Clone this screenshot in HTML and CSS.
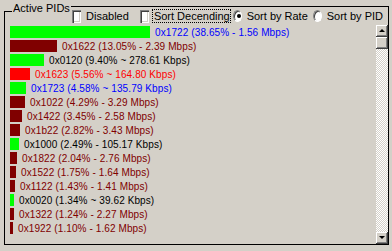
FILE: index.html
```html
<!DOCTYPE html>
<html lang="en">
<head>
  <meta charset="UTF-8">
  <title>Active PIDs</title>
  <link rel="stylesheet" href="styles.css">
</head>
<body>

  <div class="group">
    <div class="legend">Active PIDs</div>

    <div class="toolbar">
      <span class="check"></span>
      <span class="label">Disabled</span>
      <span class="check second"></span>
      <span class="label focus">Sort Decending</span>
      <span class="radio on"></span>
      <span class="label">Sort by Rate</span>
      <span class="radio"></span>
      <span class="label">Sort by PID</span>
    </div>

    <div class="listbox">
      <div class="rows">
        <div class="row"><span class="bar green" style="width:140px"></span><span class="txt blue">0x1722 (38.65% - 1.56 Mbps)</span></div>
        <div class="row"><span class="bar dark" style="width:47px"></span><span class="txt maroon">0x1622 (13.05% - 2.39 Mbps)</span></div>
        <div class="row"><span class="bar green" style="width:34px"></span><span class="txt">0x0120 (9.40% ~ 278.61 Kbps)</span></div>
        <div class="row"><span class="bar red" style="width:20px"></span><span class="txt redtxt">0x1623 (5.56% ~ 164.80 Kbps)</span></div>
        <div class="row"><span class="bar green" style="width:16px"></span><span class="txt blue">0x1723 (4.58% ~ 135.79 Kbps)</span></div>
        <div class="row"><span class="bar dark" style="width:15px"></span><span class="txt maroon">0x1022 (4.29% - 3.29 Mbps)</span></div>
        <div class="row"><span class="bar dark" style="width:12px"></span><span class="txt maroon">0x1422 (3.45% - 2.58 Mbps)</span></div>
        <div class="row"><span class="bar dark" style="width:10px"></span><span class="txt maroon">0x1b22 (2.82% - 3.43 Mbps)</span></div>
        <div class="row"><span class="bar green" style="width:9px"></span><span class="txt">0x1000 (2.49% - 105.17 Kbps)</span></div>
        <div class="row"><span class="bar dark" style="width:7px"></span><span class="txt maroon">0x1822 (2.04% - 2.76 Mbps)</span></div>
        <div class="row"><span class="bar dark" style="width:6px"></span><span class="txt maroon">0x1522 (1.75% - 1.64 Mbps)</span></div>
        <div class="row"><span class="bar dark" style="width:5px"></span><span class="txt maroon">0x1122 (1.43% - 1.41 Mbps)</span></div>
        <div class="row"><span class="bar green" style="width:4px"></span><span class="txt">0x0020 (1.34% ~ 39.62 Kbps)</span></div>
        <div class="row"><span class="bar dark" style="width:4px"></span><span class="txt maroon">0x1322 (1.24% - 2.27 Mbps)</span></div>
        <div class="row"><span class="bar dark" style="width:3px"></span><span class="txt maroon">0x1922 (1.10% - 1.62 Mbps)</span></div>
      </div>

      <div class="scrollbar">
        <div class="sbtn"><span class="arrow up"></span></div>
        <div class="thumb"></div>
        <div class="track"></div>
        <div class="sbtn"><span class="arrow down"></span></div>
      </div>
    </div>
  </div>

</body>
</html>
```

FILE: styles.css
```css
body {
  margin: 0;
  background: #d4d0c8;
  font-family: "Liberation Sans", Arial, sans-serif;
  font-size: 11px;
  color: #000;
}
.group {
  position: relative;
  margin: 6px 3px 0 4px;
  height: 237px;
  border: 1px solid #000;
}
.legend {
  position: absolute;
  left: -1px;
  top: -7px;
  width: 67px;
  height: 11px;
  padding-left: 9px;
  box-sizing: border-box;
  background: #d4d0c8;
  line-height: 16px;
  white-space: nowrap;
}
.legend::after {
  content: "";
  position: absolute;
  left: 0;
  top: 11px;
  width: 8px;
  height: 1px;
  background: #000;
}
.toolbar {
  display: flex;
  align-items: center;
  height: 18px;
  padding-left: 67px;
  white-space: nowrap;
}
.check {
  width: 13px;
  height: 13px;
  box-sizing: border-box;
  background: #fff;
  box-shadow: inset 1px 1px #808080, inset 2px 2px #404040, inset -1px -1px #fff, inset -2px -2px #d4d0c8;
  margin-right: 5px;
}
.check.second {
  margin-left: 6px;
  margin-right: 3px;
}
.radio {
  width: 12px;
  height: 12px;
  box-sizing: border-box;
  border-radius: 50%;
  background: #fff;
  border: 1px solid;
  border-color: #808080 #fff #fff #808080;
  box-shadow: inset 1px 1px #404040;
  position: relative;
  margin-right: 5px;
}
.radio.on::after {
  content: "";
  position: absolute;
  left: 3px;
  top: 3px;
  width: 4px;
  height: 4px;
  border-radius: 50%;
  background: #000;
}
.label {
  margin-right: 5px;
}
.focus {
  border: 1px dotted #000;
  padding: 0 0 0 1px;
  line-height: 12px;
  margin-right: 2px;
}
.listbox {
  display: flex;
  height: 219px;
}
.rows {
  flex: 1;
  padding: 1px 0 0 5px;
  overflow: hidden;
}
.row {
  display: flex;
  align-items: flex-start;
  height: 14px;
  font-size: 10px;
  line-height: 14px;
  letter-spacing: 0.1px;
  white-space: nowrap;
}
.bar {
  height: 12px;
  margin-right: 5px;
  flex: none;
}
.green { background: #00ff00; }
.dark { background: #800000; }
.red { background: #ff0000; }
.blue { color: #0000ff; }
.maroon { color: #800000; }
.redtxt { color: #ff0000; }
.scrollbar {
  width: 12px;
  display: flex;
  flex-direction: column;
}
.sbtn, .thumb {
  height: 12px;
  flex: none;
  background: #d4d0c8;
  box-shadow: inset -1px -1px #404040, inset 1px 1px #fff, inset -2px -2px #808080;
  display: flex;
  align-items: center;
  justify-content: center;
}
.track {
  flex: 1;
  background: repeating-conic-gradient(#fff 0 25%, #d4d0c8 0 50%) 0 0 / 2px 2px;
}
.arrow {
  width: 0;
  height: 0;
  border-left: 3px solid transparent;
  border-right: 3px solid transparent;
}
.arrow.up {
  border-bottom: 3px solid #000;
  margin-top: -1px;
}
.arrow.down {
  border-top: 3px solid #000;
  margin-top: -1px;
}
```
